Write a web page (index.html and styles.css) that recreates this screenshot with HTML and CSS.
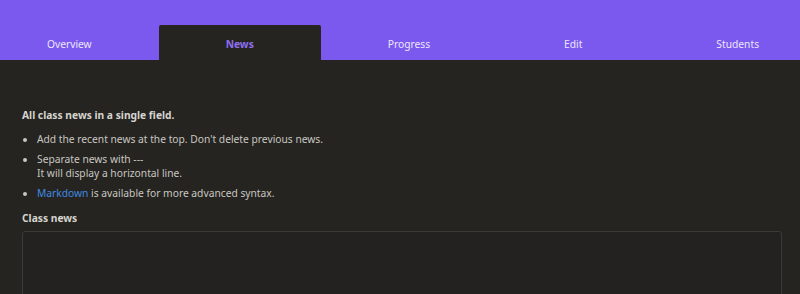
FILE: index.html
```html
<!DOCTYPE html>
<html lang="en">
<head>
    <meta charset="UTF-8">
    <meta name="viewport" content="width=device-width, initial-scale=1.0">
    <title>Class News</title>
    <link rel="stylesheet" href="styles.css">
</head>
<body>

<div class="header">
    <nav class="tabs">
        <a class="tab" href="#">Overview</a>
        <a class="tab active" href="#">News</a>
        <a class="tab" href="#">Progress</a>
        <a class="tab" href="#">Edit</a>
        <a class="tab" href="#">Students</a>
    </nav>
</div>

<div class="content">
    <p class="intro">All class news in a single field.</p>
    <ul class="rules">
        <li>Add the recent news at the top. Don't delete previous news.</li>
        <li>Separate news with ---<br>It will display a horizontal line.</li>
        <li><a href="#">Markdown</a> is available for more advanced syntax.</li>
    </ul>
    <label class="field-label" for="news">Class news</label>
    <textarea id="news" class="news-box"></textarea>
</div>

</body>
</html>
```

FILE: styles.css
```css
body {
    margin: 0;
    background-color: #252420;
    color: #c9c7c2;
    font-family: "Noto Sans", "Open Sans", sans-serif;
    font-size: 10.25px;
    overflow: hidden;
}

.header {
    background-color: #7c59ee;
    padding-top: 25px;
    overflow: hidden;
}

.tabs {
    display: flex;
    margin: 0 -26px 0 -20px;
}

.tab {
    flex: 1 1 auto;
    text-align: center;
    padding: 12px 0 9px;
    line-height: 14px;
    color: #ece6ff;
    text-decoration: none;
    border-radius: 2px 2px 0 0;
}

.tab.active {
    background-color: #252420;
    color: #8f6ff2;
    font-weight: bold;
}

.content {
    padding: 48px 18px 0 22px;
}

.intro {
    margin: 0 0 10px;
    font-weight: bold;
    color: #d6d4cf;
    line-height: 14px;
}

.rules {
    margin: 0 0 11px;
    padding-left: 15px;
    line-height: 14px;
}

.rules li {
    margin-bottom: 6px;
}

.rules a {
    color: #3f8ae0;
    text-decoration: none;
}

.field-label {
    display: block;
    font-weight: bold;
    color: #d6d4cf;
    line-height: 14px;
    margin-bottom: 6px;
}

.news-box {
    display: block;
    box-sizing: border-box;
    width: 100%;
    height: 120px;
    background-color: #232220;
    border: 1px solid #3b3a36;
    border-radius: 3px;
    resize: none;
}
```
